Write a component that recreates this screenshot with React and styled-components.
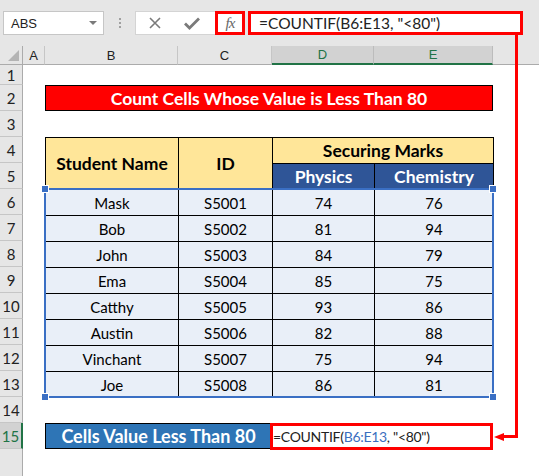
import React from 'react'
import styled, { createGlobalStyle } from 'styled-components'

const GlobalStyle = createGlobalStyle`
  html, body { margin:0; padding:0; background:#fff; }
  body { font-family:"Lato", "Liberation Sans", sans-serif; }
`

const students = [
  ['Mask', 'S5001', 74, 76],
  ['Bob', 'S5002', 81, 94],
  ['John', 'S5003', 84, 79],
  ['Ema', 'S5004', 85, 75],
  ['Catthy', 'S5005', 93, 86],
  ['Austin', 'S5006', 82, 88],
  ['Vinchant', 'S5007', 75, 94],
  ['Joe', 'S5008', 86, 81],
]

const columns = [
  { label: 'A' },
  { label: 'B' },
  { label: 'C' },
  { label: 'D', active: true },
  { label: 'E', active: true },
]

function App() {
  return (
    <Page>
      <GlobalStyle />
      <Toolbar>
        <NameBox>
          <span>ABS</span>
          <Caret />
        </NameBox>
        <Grip>
          <i /><i /><i />
        </Grip>
        <ActionBox>
          <svg width="14" height="14" viewBox="0 0 14 14">
            <path d="M2 2 L12 12 M12 2 L2 12" stroke="#7a7a7a" strokeWidth="1.6" fill="none" />
          </svg>
          <svg width="18" height="14" viewBox="0 0 18 14">
            <path d="M2 7.5 L6.5 12 L16 2.5" stroke="#7a7a7a" strokeWidth="2.8" fill="none" />
          </svg>
        </ActionBox>
        <FxBox>fx</FxBox>
        <FormulaInput>=COUNTIF(B6:E13, "&lt;80")</FormulaInput>
      </Toolbar>

      <Sheet>
        <Corner />
        {columns.map(c => (
          <ColHead key={c.label} $active={c.active}>{c.label}</ColHead>
        ))}
        <ColRest />

        {Array.from({ length: 15 }, (_, i) => (
          <RowHead key={i} $row={i + 2} $active={i === 14}>{i + 1}</RowHead>
        ))}
        <RowFill />

        <TitleCell>Count Cells Whose Value is Less Than 80</TitleCell>

        <HeadCell $col="3" $row="5 / 7">Student Name</HeadCell>
        <HeadCell $col="4" $row="5 / 7">ID</HeadCell>
        <HeadCell $col="5 / 7" $row="5">Securing Marks</HeadCell>
        <SubHeadCell $col="5">Physics</SubHeadCell>
        <SubHeadCell $col="6">Chemistry</SubHeadCell>

        {students.map((s, r) =>
          s.map((v, c) => (
            <DataCell key={r + '-' + c} $col={c + 3} $row={r + 7}>{v}</DataCell>
          ))
        )}

        <Selection>
          <Handle $x="left" $y="top" />
          <Handle $x="right" $y="top" />
          <Handle $x="left" $y="bottom" />
          <Handle $x="right" $y="bottom" />
        </Selection>

        <LabelCell>Cells Value Less Than 80</LabelCell>
        <FormulaCell>=COUNTIF(<Ref>B6:E13</Ref>, "&lt;80")</FormulaCell>
      </Sheet>

      <Connector>
        <Arrow />
      </Connector>
    </Page>
  )
}

export default App

const Page = styled.div`
  position:relative;
  width:539px;
  height:476px;
  overflow:hidden;
  background:#fff;
`

const Toolbar = styled.div`
  height:46px;
  box-sizing:border-box;
  background:#e6e6e6;
  display:flex;
  align-items:flex-start;
  padding:11px 0 0 3px;
  font-family:"Liberation Sans", Arial, sans-serif;
`

const NameBox = styled.div`
  width:101px;
  height:24px;
  box-sizing:border-box;
  background:#fff;
  border:1px solid #c6c6c6;
  display:flex;
  align-items:center;
  justify-content:space-between;
  padding:0 6px 0 7px;
  font-size:13px;
  color:#222;
`

const Caret = styled.span`
  width:0;
  height:0;
  border-left:4px solid transparent;
  border-right:4px solid transparent;
  border-top:4px solid #7a7a7a;
`

const Grip = styled.div`
  width:31px;
  height:24px;
  display:flex;
  flex-direction:column;
  align-items:center;
  justify-content:center;
  gap:2px;
  i{
    width:2px;
    height:2px;
    background:#a0a0a0;
  }
`

const ActionBox = styled.div`
  width:80px;
  height:24px;
  box-sizing:border-box;
  background:#fff;
  border:1px solid #d4d4d4;
  border-right:none;
  display:flex;
  align-items:center;
  justify-content:space-around;
  padding:0 4px 0 2px;
`

const FxBox = styled.div`
  width:30px;
  height:24px;
  box-sizing:border-box;
  background:#fff;
  border:3px solid #ff0000;
  display:flex;
  align-items:center;
  justify-content:center;
  font-family:"Liberation Serif", serif;
  font-style:italic;
  font-size:15px;
  color:#666;
  letter-spacing:-1px;
`

const FormulaInput = styled.div`
  width:275px;
  height:24px;
  margin-left:3px;
  box-sizing:border-box;
  background:#fff;
  border:3px solid #ff0000;
  display:flex;
  align-items:center;
  padding-left:8px;
  font-family:"Lato", "Liberation Sans", sans-serif;
  font-size:15.5px;
  color:#222;
`

const Sheet = styled.div`
  display:grid;
  grid-template-columns:23px 22px 133px 94px 102px 119px 1fr;
  grid-template-rows:19px 20px repeat(14, 26px) 1fr;
  height:430px;
`

const Corner = styled.div`
  grid-column:1;
  grid-row:1;
  background:#e6e6e6;
  border-right:1px solid #ababab;
  border-bottom:1px solid #ababab;
  position:relative;
  &::after{
    content:'';
    position:absolute;
    right:3px;
    bottom:3px;
    border-left:11px solid transparent;
    border-bottom:11px solid #b4b4b4;
  }
`

const ColHead = styled.div`
  grid-row:1;
  background:${p => p.$active ? '#d2d2d2' : '#e6e6e6'};
  color:${p => p.$active ? '#217346' : '#222'};
  border-right:1px solid ${p => p.$active ? '#bcbcbc' : '#c6c6c6'};
  border-bottom:${p => p.$active ? '2px solid #217346' : '1px solid #ababab'};
  display:flex;
  align-items:center;
  justify-content:center;
  font-family:"Liberation Sans", Arial, sans-serif;
  font-size:13px;
`

const ColRest = styled.div`
  grid-row:1;
  grid-column:7;
  background:#e6e6e6;
  border-bottom:1px solid #ababab;
`

const RowHead = styled.div`
  grid-column:1;
  grid-row:${p => p.$row};
  background:${p => p.$active ? '#d2d2d2' : '#e6e6e6'};
  color:${p => p.$active ? '#217346' : '#222'};
  border-right:${p => p.$active ? '2px solid #217346' : '1px solid #ababab'};
  border-bottom:1px solid #c6c6c6;
  display:flex;
  align-items:center;
  justify-content:center;
  font-size:15px;
`

const RowFill = styled.div`
  grid-column:1;
  grid-row:17;
  background:#e6e6e6;
  border-right:1px solid #ababab;
`

const TitleCell = styled.div`
  grid-column:3 / 7;
  grid-row:3;
  background:#ff0000;
  color:#fff;
  border:1px solid #000;
  display:flex;
  align-items:center;
  justify-content:center;
  font-weight:700;
  font-size:17.5px;
`

const TableCell = styled.div`
  grid-column:${p => p.$col};
  grid-row:${p => p.$row};
  border:1px solid #000;
  margin:0 -1px -1px 0;
  display:flex;
  align-items:center;
  justify-content:center;
`

const HeadCell = styled(TableCell)`
  background:#ffe699;
  color:#000;
  font-weight:700;
  font-size:17.5px;
`

const SubHeadCell = styled(TableCell).attrs({ $row: 6 })`
  background:#2f5597;
  color:#fff;
  font-weight:700;
  font-size:17.5px;
`

const DataCell = styled(TableCell)`
  background:#e9eff8;
  color:#000;
  font-size:15px;
`

const Selection = styled.div`
  grid-column:3 / 7;
  grid-row:7 / 15;
  margin:-1px -1px -1px -1px;
  border:2px solid #3a6fc4;
  position:relative;
  pointer-events:none;
  z-index:2;
`

const Handle = styled.span`
  position:absolute;
  width:6px;
  height:6px;
  background:#3a6fc4;
  border:1px solid #fff;
  ${p => p.$x}:-5px;
  ${p => p.$y}:-5px;
`

const LabelCell = styled.div`
  grid-column:3 / 5;
  grid-row:16;
  background:#2e75b6;
  color:#fff;
  border:1px solid #000;
  display:flex;
  align-items:center;
  justify-content:center;
  font-weight:700;
  font-size:18px;
`

const FormulaCell = styled.div`
  grid-column:5 / 7;
  grid-row:16;
  margin:0 0 -1px -2px;
  border:3px solid #ff0000;
  display:flex;
  align-items:center;
  font-size:14px;
  letter-spacing:-0.3px;
  color:#222;
  white-space:pre;
  z-index:1;
`

const Ref = styled.span`
  color:#3b6fc0;
`

const Connector = styled.div`
  position:absolute;
  left:515px;
  top:35px;
  width:3px;
  height:403px;
  background:#ff0000;
  &::after{
    content:'';
    position:absolute;
    right:0;
    bottom:0;
    width:14px;
    height:3px;
    background:#ff0000;
  }
`

const Arrow = styled.span`
  position:absolute;
  left:-21px;
  bottom:-3px;
  width:0;
  height:0;
  border-top:4.5px solid transparent;
  border-bottom:4.5px solid transparent;
  border-right:10px solid #ff0000;
`
